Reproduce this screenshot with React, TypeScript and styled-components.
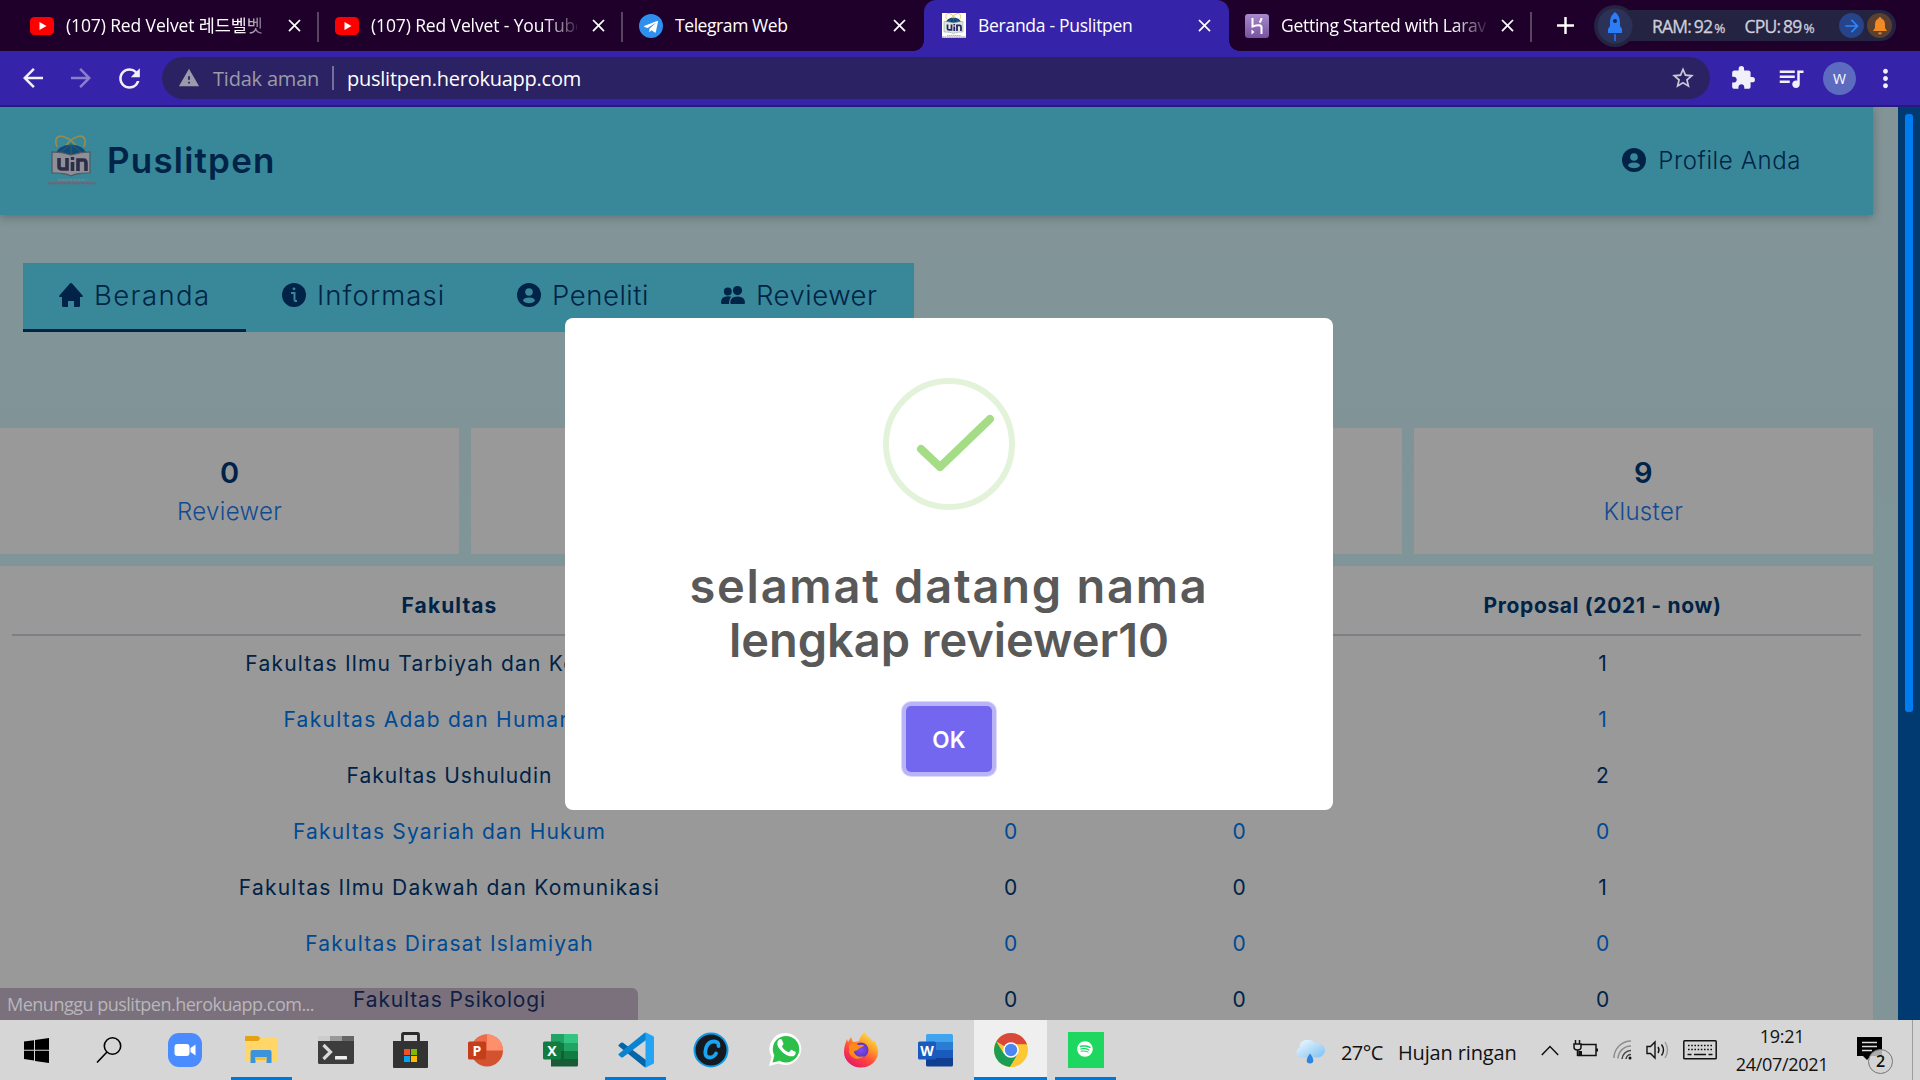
import React from "react";
import styled, { createGlobalStyle, css } from "styled-components";
import {
  MdAdd, MdArrowBack, MdArrowForward, MdClose, MdExtension, MdMoreVert,
  MdQueueMusic, MdRefresh, MdStarBorder, MdWarning,
} from "react-icons/md";
import { FaSpotify, FaTelegramPlane } from "react-icons/fa";

const uiFont = `"Open Sans", "Noto Sans", "Noto Sans CJK KR", sans-serif`;
const pageFont = `Inter, "Noto Sans", sans-serif`;
const navy = "#002347";
const blue = "#004a94";

const GlobalStyle = createGlobalStyle`
  * { box-sizing: border-box; }
  body { margin: 0; background: #819497; overflow: hidden; }
  svg { display: block; flex: none; }
`;

const Screen = styled.div`
  width: 1920px;
  height: 1080px;
  display: flex;
  flex-direction: column;
  position: relative;
  overflow: hidden;
  font-family: ${uiFont};
`;

/* ---------- browser chrome ---------- */

const TabStrip = styled.div`
  height: 51px;
  display: flex;
  align-items: stretch;
  background: #1e002b;
  padding-left: 14px;
`;

const Tab = styled.div<{ $active?: boolean; $w: number; $line?: boolean }>`
  width: ${(p) => p.$w}px;
  display: flex;
  align-items: center;
  padding: 0 14px 0 16px;
  color: #fff;
  position: relative;
  ${(p) => p.$line && css`
    background: linear-gradient(#5a4560, #5a4560) right 0 top 12px / 2px 30px no-repeat;
  `}
  ${(p) => p.$active && css`
    background: #3523a9;
    border-radius: 12px 12px 0 0;
    padding-left: 18px;
    &::before, &::after {
      content: "";
      position: absolute;
      bottom: 0;
      width: 10px;
      height: 10px;
    }
    &::before { left: -10px; background: radial-gradient(circle at 0 0, transparent 9.5px, #3523a9 10px); }
    &::after { right: -10px; background: radial-gradient(circle at 100% 0, transparent 9.5px, #3523a9 10px); }
  `}
`;

const TabTitle = styled.span<{ $fade?: boolean; $ls: number }>`
  width: 208px;
  margin: 0 11px 1px 12px;
  font-size: 17.5px;
  line-height: 26px;
  letter-spacing: ${(p) => p.$ls}px;
  white-space: nowrap;
  overflow: hidden;
  ${(p) => p.$fade && css`
    mask-image: linear-gradient(to right, #000 84%, transparent 102%);
  `}
`;

const NewTab = styled.div`
  width: 62px;
  display: flex;
  align-items: center;
  justify-content: center;
  color: #fff;
  padding-left: 4px;
`;

const Monitor = styled.div`
  display: flex;
  align-items: center;
  align-self: center;
  width: 300px;
  height: 46px;
`;

const RocketDisc = styled.div`
  width: 42px;
  height: 46px;
  flex: none;
  display: flex;
  align-items: center;
  justify-content: center;
  z-index: 1;
`;

const MonitorBar = styled.div`
  height: 31px;
  width: 274px;
  margin-left: -14px;
  padding: 0 1px 0 30px;
  border-radius: 0 16px 16px 0;
  background: #242342;
  color: #cdced9;
  display: flex;
  align-items: center;
  font-size: 17.5px;
  letter-spacing: -0.8px;
  white-space: nowrap;
  -webkit-text-stroke: 0.3px #cdced9;
  small { font-size: 13.5px; margin-left: 2px; }
`;

const Reading = styled.span<{ $w: number }>`
  width: ${(p) => p.$w}px;
  word-spacing: -1px;
`;

const Disc = styled.span<{ $bg: string }>`
  width: 25px;
  height: 25px;
  border-radius: 50%;
  margin-right: 3px;
  background: ${(p) => p.$bg};
  display: flex;
  align-items: center;
  justify-content: center;
`;

const Toolbar = styled.div`
  height: 56px;
  background: #3523a9;
  border-bottom: 2px solid #28197f;
  display: flex;
  align-items: center;
  color: #f1f0fa;
  padding-left: 18px;
`;

const ToolButton = styled.span<{ $w: number; $dim?: boolean }>`
  width: ${(p) => p.$w}px;
  flex: none;
  display: flex;
  opacity: ${(p) => (p.$dim ? 0.45 : 1)};
`;

const Omnibox = styled.div`
  width: 1548px;
  height: 42px;
  border-radius: 21px;
  background: #2b2263;
  display: flex;
  align-items: center;
  flex: none;
  margin-right: 20px;
  padding: 0 14px 0 16px;
  font-size: 20px;
  color: #9a9ba8;
`;

const Insecure = styled.span`
  margin-left: 13px;
  letter-spacing: -0.2px;
  width: 119px;
`;

const UrlDivider = styled.span`
  width: 2px;
  height: 24px;
  background: #74709a;
`;

const Url = styled.span`
  flex: 1;
  margin-left: 13px;
  color: #fff;
  letter-spacing: -0.25px;
`;

const Avatar = styled.span`
  width: 33px;
  height: 33px;
  flex: none;
  margin: 0 15px 0 19px;
  border-radius: 50%;
  background: #5c6bc0;
  color: #fff;
  font-size: 14px;
  display: flex;
  align-items: center;
  justify-content: center;
`;

/* ---------- web page ---------- */

const Viewport = styled.div`
  height: 913px;
  display: flex;
  font-family: ${pageFont};
  color: ${navy};
  overflow: hidden;
`;

const Page = styled.div`
  flex: 1;
  padding-right: 25px;
  background: linear-gradient(#839497, #819497 30%, #7f9598 50%, #819598);
`;

const ScrollTrack = styled.div`
  width: 22px;
  background: #003a70;
  padding: 7px 7px 0 7px;
`;

const ScrollThumb = styled.div`
  height: 598px;
  border-radius: 3px;
  background: #007cf3;
`;

const PageHeader = styled.header`
  height: 108px;
  background: #388899;
  box-shadow: 0 2px 9px rgba(40, 50, 55, 0.4);
  display: flex;
  align-items: center;
  justify-content: space-between;
  padding: 0 72px 2px 48px;
`;

const Brand = styled.div`
  display: flex;
  align-items: center;
  gap: 11px;
  font-size: 35px;
  font-weight: 600;
  letter-spacing: 1.2px;
`;

const Profile = styled.div`
  display: flex;
  align-items: center;
  gap: 12px;
  font-size: 24px;
  font-weight: 300;
  letter-spacing: 0.6px;
`;

const PageNav = styled.nav`
  width: 891px;
  height: 69px;
  margin: 48px 0 0 23px;
  background: #388899;
  display: flex;
`;

const NavItem = styled.div<{ $w: number; $ls: number; $active?: boolean }>`
  width: ${(p) => p.$w}px;
  padding: 0 0 5px 36px;
  display: flex;
  align-items: center;
  gap: 11px;
  font-size: 27.5px;
  font-weight: 300;
  letter-spacing: ${(p) => p.$ls}px;
  box-shadow: ${(p) => (p.$active ? `inset 0 -3px ${navy}` : "none")};
`;

const Cards = styled.div`
  margin-top: 96px;
  display: grid;
  grid-template-columns: repeat(4, 1fr);
  gap: 12px;
`;

const Card = styled.div`
  height: 126px;
  background: #999999;
  display: flex;
  flex-direction: column;
  align-items: center;
  padding-top: 25px;
`;

const CardValue = styled.div`
  font-size: 29px;
  line-height: 40px;
  font-weight: 600;
`;

const CardLabel = styled.div`
  font-size: 24px;
  line-height: 38px;
  font-weight: 300;
  letter-spacing: 0.35px;
  color: #124a91;
`;

const Panel = styled.div`
  height: 480px;
  margin-top: 12px;
  padding: 0 12px;
  background: #999999;
`;

const Table = styled.table`
  width: 1849px;
  table-layout: fixed;
  border-collapse: collapse;
  text-align: center;
  font-size: 21px;
`;

const HeadCell = styled.th<{ $w: number; $ls?: number }>`
  width: ${(p) => p.$w}px;
  height: 69px;
  padding: 11px 0 0;
  border-bottom: 2px solid #7c8085;
  font-weight: 700;
  letter-spacing: ${(p) => p.$ls ?? 0}px;
`;

const Row = styled.tr<{ $link: boolean }>`
  height: 56px;
  color: ${(p) => (p.$link ? blue : navy)};
`;

const Cell = styled.td<{ $ls?: number }>`
  padding: 0;
  letter-spacing: ${(p) => p.$ls ?? 0}px;
  white-space: nowrap;
`;

const Modal = styled.div`
  position: absolute;
  left: 565px;
  top: 318px;
  width: 768px;
  height: 492px;
  border-radius: 8px;
  background: #fff;
  display: flex;
  flex-direction: column;
  align-items: center;
  padding-top: 60px;
  font-family: ${pageFont};
`;

const ModalTitle = styled.h2`
  margin: 49px 0 0;
  font-size: 47px;
  line-height: 54px;
  font-weight: 600;
  color: #595959;
  text-align: center;
`;

const TitleLine = styled.span<{ $ls: number }>`
  display: block;
  letter-spacing: ${(p) => p.$ls}px;
`;

const OkButton = styled.button`
  width: 86px;
  height: 66px;
  margin-top: 39px;
  border: 0;
  border-radius: 5px;
  background: #7367f0;
  box-shadow: 0 0 0 4px #b9b3f7, 0 0 0 5px #dcd9fb;
  color: #fff;
  font: 600 22.5px ${pageFont};
  letter-spacing: 0.2px;
`;

const StatusBubble = styled.div`
  position: absolute;
  left: 0;
  top: 988px;
  width: 638px;
  height: 32px;
  border-radius: 0 6px 0 0;
  background: rgba(52, 22, 59, 0.3);
  color: #b9b6bb;
  font-size: 18px;
  line-height: 32px;
  padding-left: 7px;
  letter-spacing: -0.5px;
`;

/* ---------- taskbar ---------- */

const Taskbar = styled.footer`
  height: 60px;
  background: #d6d6d6;
  color: #111;
  display: flex;
`;

const TaskSlot = styled.div<{ $w?: number; $active?: boolean; $running?: boolean }>`
  width: ${(p) => p.$w ?? 75}px;
  flex: none;
  display: flex;
  align-items: center;
  justify-content: center;
  padding: 0 1px;
  ${(p) => p.$running && css`
    background-image: linear-gradient(#0078d7, #0078d7);
    background-repeat: no-repeat;
    background-size: ${p.$active ? 73 : 61}px 3px;
    background-position: center bottom;
  `}
  ${(p) => p.$active && css`
    background-color: #efefef;
    background-clip: content-box;
  `}
`;

const Weather = styled.div`
  display: flex;
  align-items: center;
  width: 247px;
  margin-left: 171px;
  padding-top: 4px;
  font-size: 20px;
  letter-spacing: -0.15px;
`;

const Degrees = styled.span`
  margin-left: 15px;
  width: 57px;
  letter-spacing: -0.6px;
`;

const Tray = styled.div`
  display: flex;
  align-items: center;
  width: 176px;
  justify-content: space-between;
`;

const Clock = styled.div`
  width: 130px;
  text-align: center;
  font-size: 18px;
  line-height: 28px;
  letter-spacing: -0.3px;
  padding-top: 2px;
`;

const Notice = styled.div`
  position: relative;
  margin: 17px 0 0 10px;
  width: 55px;
`;

const NoticeCount = styled.span`
  position: absolute;
  left: 11px;
  top: 12px;
  width: 25px;
  height: 25px;
  border: 1.5px solid #777;
  border-radius: 50%;
  background: #d3d3d3d0;
  font-size: 16px;
  font-weight: 600;
  line-height: 22px;
  text-align: center;
`;

const DesktopEdge = styled.div`
  width: 1px;
  background: #9d9d9d;
`;

/* ---------- drawings ---------- */

const YouTube = () => (
  <svg width="24" height="18" viewBox="0 0 24 18">
    <rect width="24" height="18" rx="4.5" fill="#f00" />
    <path d="M9.5 5v8l7-4z" fill="#fff" />
  </svg>
);

const TelegramIcon = () => (
  <svg width="24" height="24" viewBox="0 0 24 24">
    <circle cx="12" cy="12" r="12" fill="#2f8fee" />
    <FaTelegramPlane x="4" y="5" width="14" height="14" color="#fff" />
  </svg>
);

const Crest = ({ size, dim }: { size: number; dim?: boolean }) => (
  <svg width={size} height={size * 1.04} viewBox="0 0 48 50">
    {!dim && <rect width="48" height="50" fill="#fff" />}
    <g fill="none" stroke={dim ? "#9a8a4c" : "#e5c04a"} strokeWidth="1.8">
      <path d="M9 12C6 4 9 0 15 1.500c7 2 13 8 16 14" />
      <path d="M36 12c3-8 0-12-6-10.500-7 2-12 8-15 14" />
    </g>
    <path d="M7 20a16.500 14 0 0 1 32 0z" fill={dim ? "#144a78" : "#123f7d"} />
    <path d="M12 18l11-9 11 9M23 8v12" stroke={dim ? "#2d6a6d" : "#6aa06a"} fill="none" strokeWidth=".8" />
    <path d="M4 17q10 0 19 3 10-3 19-3v21q-9 0-15 1.500l-4 1.500-4-1.500q-6-1.500-15-1.500z" fill={dim ? "#8f9096" : "#dfe8da"} stroke={dim ? "#4f5a66" : "#8aa"} strokeWidth="1.2" />
    <g fill="none" stroke={dim ? "#2c2d48" : "#2a2466"} strokeWidth="3.6">
      <path d="M11 23v8.500q0 2.500 3 2.500h5V23M24.500 27v9M30 36V25h5.500q2.500 0 2.500 3v8" />
    </g>
    <path d="M24.500 22v3" stroke={dim ? "#2c2d48" : "#2a2466"} strokeWidth="3.4" />
    <path d="M10 45h28" stroke="#8a7f88" strokeWidth="1.2" strokeDasharray="3 .8" />
    <path d="M0 48.3h48" stroke={dim ? "#7a5f70" : "#a07d8a"} strokeWidth="2" strokeDasharray="4 .7" />
  </svg>
);

const Heroku = () => (
  <svg width="24" height="24" viewBox="0 0 24 24">
    <defs>
      <linearGradient id="hk" x2="0" y2="1"><stop stopColor="#a889cc" /><stop offset="1" stopColor="#76539f" /></linearGradient>
    </defs>
    <rect width="24" height="24" rx="3" fill="url(#hk)" />
    <path d="M7.500 4v8.500q9-3 9 1V20M16.500 4q0 2.500-2 4.500" fill="none" stroke="#fff" strokeWidth="2" />
    <path d="M6.500 15.500l3 2.500-3 2.500z" fill="#fff" />
  </svg>
);

const Rocket = () => (
  <svg width="42" height="46" viewBox="0 0 42 46">
    <circle cx="21" cy="23" r="21" fill="#242342" />
    <circle cx="21" cy="23" r="17.500" fill="#2c3157" />
    <path d="M21 9c4 3 5 7 5 11v3l2 3v4H14v-4l2-3v-3c0-4 1-8 5-11zM20.300 31h1.400v7h-1.400z" fill="#2a7df5" />
    <circle cx="21" cy="18" r="2" fill="#1b2650" />
  </svg>
);

const BellIcon = () => (
  <svg width="14" height="18" viewBox="0 0 14 18" fill="#f08a24">
    <path d="M7 0q1.500 0 1.500 1.800Q12 3 12 7.500V11l2 3H0l2-3V7.500Q2 3 5.500 1.800 5.500 0 7 0zM5 15.500h4q-.5 2-2 2t-2-2z" />
  </svg>
);

const HomeIcon = () => (
  <svg width="24" height="24" viewBox="0 0 24 24" fill={navy}>
    <path d="M12 0q.7 0 1.300.8L23.600 12.400q.9 1.600-.8 1.600H21v8.800q0 1.200-1.200 1.200H15v-6H9v6H4.200Q3 24 3 22.800V14H1.200q-1.700 0-.8-1.600L10.700.8Q11.300 0 12 0z" />
  </svg>
);

const InfoIcon = () => (
  <svg width="24" height="24" viewBox="0 0 24 24">
    <circle cx="12" cy="12" r="12" fill={navy} />
    <circle cx="12" cy="5.800" r="1.400" fill="#388899" />
    <path d="M9 10h3.500v6.500q0 1.800 2.500 1.500" fill="none" stroke="#388899" strokeWidth="2" />
  </svg>
);

const PersonIcon = () => (
  <svg width="24" height="24" viewBox="0 0 24 24">
    <circle cx="12" cy="12" r="12" fill={navy} />
    <circle cx="12" cy="9" r="3.800" fill="#388899" />
    <path d="M6 18q0-3.500 6-3.500t6 3.500q-2.500 2.200-6 2.200T6 18z" fill="#388899" />
  </svg>
);

const PeopleIcon = () => (
  <svg width="24" height="24" viewBox="0 0 24 24" fill={navy}>
    <circle cx="6.800" cy="8.500" r="3.900" />
    <circle cx="16.500" cy="7.600" r="4.600" />
    <path d="M0 19.500q0-6.300 7-6.300 2 0 3.200.6Q8 16 8 21H1.200Q0 21 0 19.500zM9.300 19.700q0-6.200 7.300-6.200t7.400 6.200q0 1.300-1.200 1.300H10.500q-1.200 0-1.200-1.300z" />
  </svg>
);

const SuccessMark = () => (
  <svg width="132" height="132" viewBox="0 0 132 132" fill="none">
    <circle cx="66" cy="66" r="63" stroke="#e3f3da" strokeWidth="6" />
    <path d="M38 71l19 18 50-48" stroke="#a5dc86" strokeWidth="8" strokeLinecap="round" strokeLinejoin="round" />
  </svg>
);

const WindowsIcon = () => (
  <svg width="25" height="25" viewBox="0 0 25 25" fill="#000">
    <path d="M0 3.600l10-1.400v9.600H0zM11 2l14-2v11.800H11zM0 12.800h10v9.600L0 21zM11 12.800h14V25l-14-2z" />
  </svg>
);

const SearchIcon = () => (
  <svg width="26" height="26" viewBox="0 0 26 26" fill="none" stroke="#000" strokeWidth="1.600">
    <circle cx="16.500" cy="9" r="8.200" /><path d="M11 15L1 25.500" />
  </svg>
);

const ZoomIcon = () => (
  <svg width="34" height="34" viewBox="0 0 34 34">
    <rect width="34" height="34" rx="11" fill="#4a8cff" />
    <rect x="6.500" y="11" width="15" height="12" rx="3" fill="#fff" />
    <path d="M22.500 15l5-3.600v11.200l-5-3.600z" fill="#fff" />
  </svg>
);

const ExplorerIcon = () => (
  <svg width="32" height="28" viewBox="0 0 32 28">
    <path d="M0 1q0-1 1-1h12l3 3v5H0z" fill="#e4a111" />
    <path d="M0 5h13l3-3h15q1 0 1 1v22H0z" fill="#ffd667" />
    <path d="M5.500 27V16q0-2 2-2h17q2 0 2 2v11h-5v-6h-11v6z" fill="#3a93dc" />
    <path d="M10.500 21h11v3h-11z" fill="#f4bd38" />
  </svg>
);

const TerminalIcon = () => (
  <svg width="36" height="28" viewBox="0 0 36 28">
    <rect width="36" height="28" rx="1.500" fill="#3d3d3d" />
    <path d="M0 0h12v5H0z" fill="#ccc" /><path d="M12 0h12v5H12z" fill="#999" /><path d="M24 0h12v5H24z" fill="#666" />
    <path d="M5.500 9l7 7-7 7" fill="none" stroke="#d9d9d9" strokeWidth="3.200" />
    <rect x="17" y="20" width="12" height="3.600" rx=".6" fill="#eee" />
  </svg>
);

const StoreIcon = () => (
  <svg width="35" height="36" viewBox="0 0 35 36">
    <path d="M9.500 10V2.500q0-1 1-1h14q1 0 1 1V10" fill="none" stroke="#2a2a2a" strokeWidth="2.800" />
    <path d="M0 9h35v26q0 1-1 1H1q-1 0-1-1z" fill="#333" />
    <path d="M11 17h6v6h-6z" fill="#f25022" /><path d="M18 17h6v6h-6z" fill="#7fba00" />
    <path d="M11 24h6v6h-6z" fill="#00a4ef" /><path d="M18 24h6v6h-6z" fill="#ffb900" />
  </svg>
);

const BadgeText = styled.text`
  font: 700 14px ${uiFont};
  fill: #fff;
  text-anchor: middle;
`;

const PowerPointIcon = () => (
  <svg width="35" height="33" viewBox="0 0 35 33">
    <circle cx="19" cy="16.500" r="16" fill="#d35230" />
    <path d="M19 .5a16 16 0 0 0-16 16h16z" fill="#ed6c47" />
    <path d="M19 .5a16 16 0 0 1 16 16H19z" fill="#ff8f6b" />
    <rect y="7.500" width="18" height="18" rx="1.500" fill="#c43e1c" />
    <BadgeText x="9" y="21.500">P</BadgeText>
  </svg>
);

const ExcelIcon = () => (
  <svg width="35" height="33" viewBox="0 0 35 33">
    <path d="M8 0h14v9H8z" fill="#21a366" />
    <path d="M21 0h13q1 0 1 1v8H21z" fill="#33c481" />
    <path d="M8 9h14v8H8z" fill="#107c41" /><path d="M21 9h14v8H21z" fill="#21a366" />
    <path d="M8 17h14v8H8z" fill="#185c37" /><path d="M21 17h14v8H21z" fill="#107c41" />
    <path d="M8 25h27v6q0 1.500-1.500 1.500H8z" fill="#185c37" />
    <rect y="7.500" width="18" height="18" rx="1.500" fill="#107c41" />
    <BadgeText x="9" y="21.500">X</BadgeText>
  </svg>
);

const WordIcon = () => (
  <svg width="35" height="33" viewBox="0 0 35 33">
    <path d="M8 8V1.500Q8 0 9.500 0h24Q35 0 35 1.500V8z" fill="#41a5ee" />
    <path d="M8 8h27v8H8z" fill="#2b7cd3" /><path d="M8 16h27v8H8z" fill="#185abd" />
    <path d="M8 24h27v7q0 1.500-1.500 1.500h-24Q8 32.500 8 31z" fill="#103f91" />
    <rect y="7.500" width="18" height="18" rx="1.500" fill="#185abd" />
    <BadgeText x="9" y="21.500">W</BadgeText>
  </svg>
);

const CodeIcon = () => (
  <svg width="36" height="36" viewBox="0 0 36 36">
    <path d="M.8 12.800L3 10.800q1-.8 2 0L28 28v7q-1 .5-2-.2L.8 14.200q-.8-.7 0-1.400z" fill="#0065a9" />
    <path d="M.8 23.200L3 25.200q1 .8 2 0L28 8V1q-1-.5-2 .2L.8 21.800q-.8.700 0 1.400z" fill="#0a84d0" />
    <path d="M26 1.200q1-.9 2.300-.4L35 4q1 .6 1 1.600v24.800q0 1-1 1.600l-6.700 3.200q-1.300.5-2.300-.4 1.500.4 1.500-1.500V2.700q0-1.900-1.500-1.500z" fill="#23a4f5" />
  </svg>
);

const CyberIcon = () => (
  <svg width="36" height="36" viewBox="0 0 36 36">
    <circle cx="18" cy="18" r="16.500" fill="#141a20" stroke="#0d9ae6" strokeWidth="2" />
    <path d="M25.500 14q.5-4.500-4.500-4.500-6 0-8 6.500-2.500 9 3.500 9.500 4.500 0 6.500-4" fill="none" stroke="#18a5f2" strokeWidth="3.800" strokeLinecap="round" />
  </svg>
);

const WhatsAppIcon = () => (
  <svg width="33" height="34" viewBox="0 0 33 34">
    <path d="M17 0a16 16 0 1 1-7.500 30.500L0 33l2.600-9A16 16 0 0 1 17 0z" fill="#fff" />
    <circle cx="17" cy="16.200" r="13.200" fill="#2cbf49" /><path d="M3.500 29.500l2-7.500 5 6z" fill="#2cbf49" />
    <svg x="6.500" y="5.500" width="22" height="22" viewBox="90 110 270 270">
      <path d="M326.600 268.800c-5.500-2.800-32.800-16.200-37.900-18-5.100-1.900-8.800-2.800-12.500 2.800-3.700 5.600-14.300 18-17.600 21.800-3.200 3.700-6.500 4.200-12 1.400-32.600-16.300-54-29.100-75.500-66-5.700-9.800 5.700-9.100 16.300-30.300 1.800-3.700.9-6.900-.5-9.700-1.400-2.800-12.500-30.100-17.100-41.200-4.500-10.800-9.100-9.300-12.500-9.500-3.200-.2-6.900-.2-10.600-.2-3.700 0-9.700 1.400-14.800 6.900-5.100 5.600-19.400 19-19.400 46.300 0 27.300 19.900 53.700 22.600 57.400 2.800 3.700 39.100 59.700 94.800 83.800 35.200 15.200 49 16.500 66.600 13.900 10.700-1.600 32.800-13.400 37.400-26.400 4.600-13 4.600-24.100 3.200-26.400-1.300-2.500-5-3.900-10.500-6.600z" fill="#fff" />
    </svg>
  </svg>
);

const FirefoxIcon = () => (
  <svg width="34" height="36" viewBox="0 0 34 36">
    <defs>
      <linearGradient id="fx" x1=".9" y1="0" x2=".25" y2="1">
        <stop stopColor="#fff44f" /><stop offset=".35" stopColor="#ffa52a" /><stop offset=".65" stopColor="#ff4a3c" /><stop offset="1" stopColor="#e5136c" />
      </linearGradient>
      <radialGradient id="fp"><stop stopColor="#7a4dff" /><stop offset="1" stopColor="#6236b8" /></radialGradient>
    </defs>
    <path d="M21 0c1 4 6 6 8 10l.5-2C33 12 34 17 34 20a17 15.500 0 0 1-34 0c0-6 2-10 3-13l1 3 3-5 2 5c3 0 5-1 6-1 1-4 3-7 6-9z" fill="url(#fx)" />
    <circle cx="17" cy="18" r="7.500" fill="url(#fp)" />
    <path d="M5 13c3-2 7-2 9 0h6c-1 3-5 2-6 5-2 1-3 0-4 2 1 4 6 6 10 4-5 5-13 3-15-4z" fill="#ff8a1c" />
  </svg>
);

const ChromeIcon = () => (
  <svg width="34" height="34" viewBox="0 0 34 34">
    <circle cx="17" cy="17" r="17" fill="#fcc934" />
    <path d="M17 17L2.300 8.500A17 17 0 0 1 31.700 8.500L33 11.500H17z" fill="#d9483b" />
    <path d="M2.300 8.500A17 17 0 0 0 16 34l8-13-7-4-7 4z" fill="#1b9d55" />
    <path d="M16 34a17 17 0 0 0 16.200-22.500H17L24.500 20z" fill="#fcc934" />
    <circle cx="17" cy="17" r="7.800" fill="#fff" /><circle cx="17" cy="17" r="6.200" fill="#4a87f3" />
  </svg>
);

const SpotifyIcon = () => (
  <svg width="36" height="36" viewBox="0 0 36 36">
    <rect width="36" height="36" fill="#1ed760" />
    <FaSpotify x="9" y="9" width="18" height="18" color="#fff" />
  </svg>
);

const RainIcon = () => (
  <svg width="32" height="24" viewBox="0 0 32 24">
    <defs><linearGradient id="cl" x2="1" y2="1"><stop stopColor="#f4fbff" /><stop offset="1" stopColor="#7dc0f3" /></linearGradient></defs>
    <path d="M6 17.500a5.500 5.500 0 0 1-.5-10A8.500 7.500 0 0 1 21 3a7.800 7.400 0 0 1 4 14.500z" fill="url(#cl)" />
    <path d="M16 13.500q3.300 4.500 3.300 6.800a3.300 3.200 0 0 1-6.600 0Q12.700 18 16 13.500z" fill="#2c86e0" />
  </svg>
);

const ChevronIcon = () => (
  <svg width="18" height="11" viewBox="0 0 18 11" fill="none" stroke="#111" strokeWidth="1.500"><path d="M.8 10L9 1.500l8.200 8.500" /></svg>
);

const BatteryIcon = () => (
  <svg width="25" height="20" viewBox="0 0 25 20" fill="none" stroke="#111" strokeWidth="1.500">
    <path d="M8 4.500h15v11H5v-5M24.500 8.500v3M2.500 0v4M6.500 0v4M1 4h7v3q0 3-3.500 3T1 7zM4.500 10v6" />
    <path d="M6 11h3v4.500H6z" fill="#111" stroke="none" />
  </svg>
);

const WifiIcon = () => (
  <svg width="19" height="20" viewBox="0 0 19 20" fill="none" strokeWidth="1.500">
    <path d="M1 18A17 17 0 0 1 18 1M5 18.500A13 13 0 0 1 18 6" stroke="#8d8d8d" />
    <path d="M9 19a9 9 0 0 1 9-8.500M13 19a5 5 0 0 1 5-4.500" stroke="#444" /><circle cx="17" cy="18" r="1.500" fill="#111" />
  </svg>
);

const VolumeIcon = () => (
  <svg width="23" height="20" viewBox="0 0 23 20" fill="none" stroke="#111" strokeWidth="1.400">
    <path d="M1 6.500h3.500L9 2v16l-4.500-4.500H1zM12 7q2 3 0 6M15.500 4.500q4 5.500 0 11" /><path d="M19 2q5 8 0 16" stroke="#999" />
  </svg>
);

const KeyboardIcon = () => (
  <svg width="34" height="20" viewBox="0 0 34 20" fill="none" stroke="#111" strokeWidth="1.500">
    <rect x=".8" y=".8" width="32.400" height="18" rx=".8" />
    <path d="M5 5.500h24M5 9.500h24" strokeDasharray="1.600 1.600" /><path d="M4.500 14.500h4M11 14.500h12M25.500 14.500h4" />
  </svg>
);

const NoticeIcon = () => (
  <svg width="25" height="24" viewBox="0 0 25 24">
    <path d="M0 0h25v19H14l-4 4-4-4H0z" fill="#000" />
    <path d="M5 5.500h15M5 9.500h15M5 13.500h10" stroke="#ddd" strokeWidth="1.300" />
  </svg>
);

/* ---------- data ---------- */

const tabs = [
  { icon: <YouTube />, title: "(107) Red Velvet 레드벨벳", w: 305, ls: -0.12, fade: true, line: true },
  { icon: <YouTube />, title: "(107) Red Velvet - YouTube", w: 304, ls: -0.12, fade: true, line: true },
  { icon: <TelegramIcon />, title: "Telegram Web", w: 301, ls: -0.42 },
  { icon: <Crest size={24} />, title: "Beranda - Puslitpen", w: 305, ls: -0.28, active: true },
  { icon: <Heroku />, title: "Getting Started with Laravel", w: 303, ls: -0.28, fade: true, line: true },
];

const navItems = [
  { icon: <HomeIcon />, label: "Beranda", w: 223, ls: 1.4, active: true },
  { icon: <InfoIcon />, label: "Informasi", w: 235, ls: 1.1 },
  { icon: <PersonIcon />, label: "Peneliti", w: 204, ls: 0.55 },
  { icon: <PeopleIcon />, label: "Reviewer", w: 229, ls: 0.5 },
];

const faculties: { name: string; ls: number; values: (number | null)[] }[] = [
  { name: "Fakultas Ilmu Tarbiyah dan Keguruan", ls: 1.2, values: [null, null, 1] },
  { name: "Fakultas Adab dan Humaniora", ls: 1.28, values: [null, null, 1] },
  { name: "Fakultas Ushuludin", ls: 0.98, values: [null, null, 2] },
  { name: "Fakultas Syariah dan Hukum", ls: 1.17, values: [0, 0, 0] },
  { name: "Fakultas Ilmu Dakwah dan Komunikasi", ls: 1.22, values: [0, 0, 1] },
  { name: "Fakultas Dirasat Islamiyah", ls: 1.2, values: [0, 0, 0] },
  { name: "Fakultas Psikologi", ls: 0.85, values: [0, 0, 0] },
];

export default function App() {
  return (
    <Screen>
      <GlobalStyle />
      <TabStrip>
        {tabs.map((t) => (
          <Tab key={t.title} $w={t.w} $active={t.active} $line={t.line}>
            {t.icon}
            <TabTitle $fade={t.fade} $ls={t.ls}>{t.title}</TabTitle>
            <MdClose size={21} />
          </Tab>
        ))}
        <NewTab><MdAdd size={29} /></NewTab>
        <Monitor>
          <RocketDisc><Rocket /></RocketDisc>
          <MonitorBar>
            <Reading $w={93}>RAM: 92<small>%</small></Reading>
            <Reading $w={95}>CPU: 89<small>%</small></Reading>
            <Disc $bg="#27438a"><MdArrowForward size={20} color="#2b86ff" /></Disc>
            <Disc $bg="#5c402f"><BellIcon /></Disc>
          </MonitorBar>
        </Monitor>
      </TabStrip>
      <Toolbar>
        <ToolButton $w={48}><MdArrowBack size={30} /></ToolButton>
        <ToolButton $w={48} $dim><MdArrowForward size={30} /></ToolButton>
        <ToolButton $w={48}><MdRefresh size={31} /></ToolButton>
        <Omnibox>
          <MdWarning size={22} />
          <Insecure>Tidak aman</Insecure>
          <UrlDivider />
          <Url>puslitpen.herokuapp.com</Url>
          <MdStarBorder size={26} color="#c9c8d6" />
        </Omnibox>
        <ToolButton $w={46}><MdExtension size={26} /></ToolButton>
        <ToolButton $w={28}><MdQueueMusic size={30} /></ToolButton>
        <Avatar>W</Avatar>
        <MdMoreVert size={29} />
      </Toolbar>

      <Viewport>
        <Page>
          <PageHeader>
            <Brand><Crest size={48} dim />Puslitpen</Brand>
            <Profile><PersonIcon />Profile Anda</Profile>
          </PageHeader>
          <PageNav>
            {navItems.map((n) => (
              <NavItem key={n.label} $w={n.w} $ls={n.ls} $active={n.active}>{n.icon}{n.label}</NavItem>
            ))}
          </PageNav>
          <Cards>
            <Card><CardValue>0</CardValue><CardLabel>Reviewer</CardLabel></Card>
            <Card />
            <Card />
            <Card><CardValue>9</CardValue><CardLabel>Kluster</CardLabel></Card>
          </Cards>
          <Panel>
            <Table>
              <thead>
                <tr>
                  <HeadCell $w={875} $ls={1.1}>Fakultas</HeadCell>
                  <HeadCell $w={247} />
                  <HeadCell $w={210} />
                  <HeadCell $w={517} $ls={0.67}>Proposal (2021 - now)</HeadCell>
                </tr>
              </thead>
              <tbody>
                {faculties.map((f, i) => (
                  <Row key={f.name} $link={i % 2 === 1}>
                    <Cell $ls={f.ls}>{f.name}</Cell>
                    {f.values.map((v, j) => <Cell key={j}>{v}</Cell>)}
                  </Row>
                ))}
              </tbody>
            </Table>
          </Panel>
        </Page>
        <ScrollTrack><ScrollThumb /></ScrollTrack>
      </Viewport>

      <Taskbar>
        <TaskSlot $w={72}><WindowsIcon /></TaskSlot>
        <TaskSlot $w={73}><SearchIcon /></TaskSlot>
        <TaskSlot $w={79}><ZoomIcon /></TaskSlot>
        <TaskSlot $w={74} $running><ExplorerIcon /></TaskSlot>
        <TaskSlot><TerminalIcon /></TaskSlot>
        <TaskSlot><StoreIcon /></TaskSlot>
        <TaskSlot><PowerPointIcon /></TaskSlot>
        <TaskSlot><ExcelIcon /></TaskSlot>
        <TaskSlot $running><CodeIcon /></TaskSlot>
        <TaskSlot><CyberIcon /></TaskSlot>
        <TaskSlot><WhatsAppIcon /></TaskSlot>
        <TaskSlot><FirefoxIcon /></TaskSlot>
        <TaskSlot><WordIcon /></TaskSlot>
        <TaskSlot $running $active><ChromeIcon /></TaskSlot>
        <TaskSlot $running><SpotifyIcon /></TaskSlot>
        <Weather><RainIcon /><Degrees>27°C</Degrees>Hujan ringan</Weather>
        <Tray><ChevronIcon /><BatteryIcon /><WifiIcon /><VolumeIcon /><KeyboardIcon /></Tray>
        <Clock>19:21<br />24/07/2021</Clock>
        <Notice><NoticeIcon /><NoticeCount>2</NoticeCount></Notice>
        <DesktopEdge />
      </Taskbar>

      <StatusBubble>Menunggu puslitpen.herokuapp.com...</StatusBubble>
      <Modal>
        <SuccessMark />
        <ModalTitle>
          <TitleLine $ls={1.75}>selamat datang nama</TitleLine>
          <TitleLine $ls={-0.05}>lengkap reviewer10</TitleLine>
        </ModalTitle>
        <OkButton>OK</OkButton>
      </Modal>
    </Screen>
  );
}
